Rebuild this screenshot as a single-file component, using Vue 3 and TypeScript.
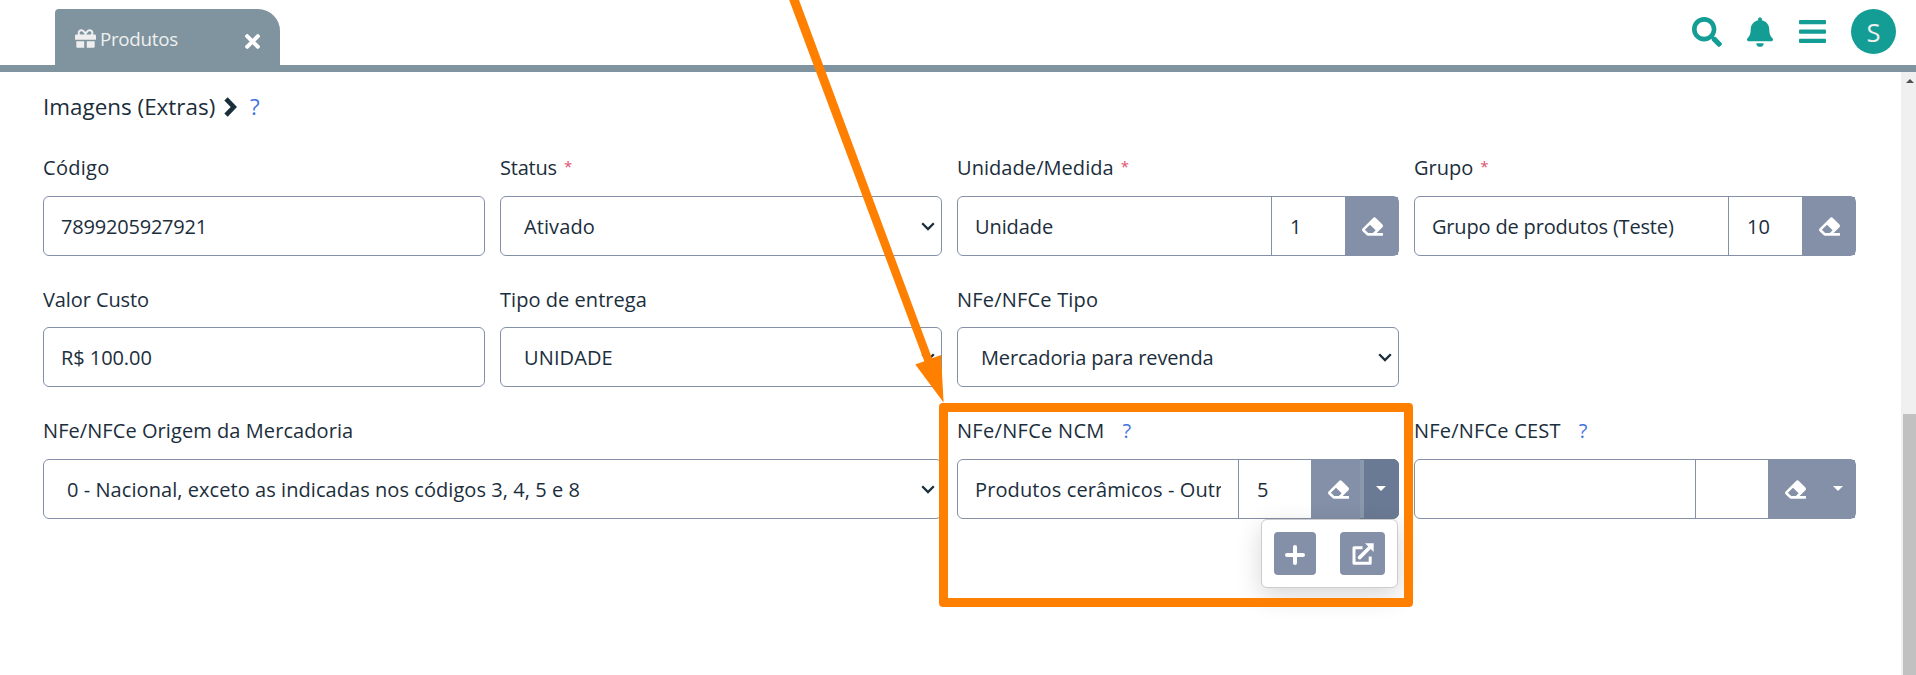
<script setup lang="ts">
interface Field {
  id: string
  label: string
  kind: 'text' | 'select' | 'lookup'
  value: string
  code?: string
  required?: boolean
  help?: boolean
  menu?: boolean
  open?: boolean
  tracking?: number
  labelTracking?: number
}

const fields: Field[] = [
  { id: 'codigo', label: 'Código', kind: 'text', value: '7899205927921', labelTracking: 0.3 },
  { id: 'status', label: 'Status', kind: 'select', value: 'Ativado', required: true, tracking: 0.1, labelTracking: -0.2 },
  { id: 'unidade', label: 'Unidade/Medida', kind: 'lookup', value: 'Unidade', code: '1', required: true, tracking: -0.1, labelTracking: 0.06 },
  { id: 'grupo', label: 'Grupo', kind: 'lookup', value: 'Grupo de produtos (Teste)', code: '10', required: true, tracking: -0.17, labelTracking: 0 },
  { id: 'custo', label: 'Valor Custo', kind: 'text', value: 'R$ 100.00', tracking: -0.07, labelTracking: -0.1 },
  { id: 'entrega', label: 'Tipo de entrega', kind: 'select', value: 'UNIDADE', tracking: 0.12, labelTracking: 0.05 },
  { id: 'tipo', label: 'NFe/NFCe Tipo', kind: 'select', value: 'Mercadoria para revenda', tracking: -0.15, labelTracking: 0.2 },
  { id: 'origem', label: 'NFe/NFCe Origem da Mercadoria', kind: 'select', value: '0 - Nacional, exceto as indicadas nos códigos 3, 4, 5 e 8', tracking: 0.06, labelTracking: 0.07 },
  { id: 'ncm', label: 'NFe/NFCe NCM', kind: 'lookup', value: 'Produtos cerâmicos - Outras', code: '5', help: true, menu: true, open: true, tracking: 0.12, labelTracking: 0.3 },
  { id: 'cest', label: 'NFe/NFCe CEST', kind: 'lookup', value: '', code: '', help: true, menu: true, labelTracking: 0.2 },
]

const spacing = (v?: number) => ({ letterSpacing: `${v ?? -0.2}px` })
</script>

<template>
  <div class="page">
    <header class="topbar">
      <div class="tab">
        <svg class="gift" viewBox="0 0 512 512"><path d="M32 448c0 17.7 14.3 32 32 32h160V320H32v128zm256 32h160c17.7 0 32-14.3 32-32V320H288v160zm192-320h-42.1c6.2-12.1 10.1-25.5 10.1-40 0-48.5-39.5-88-88-88-41.6 0-68.5 21.3-103 68.3-34.5-47-61.4-68.3-103-68.3-48.5 0-88 39.5-88 88 0 14.5 3.8 27.9 10.1 40H32c-17.7 0-32 14.3-32 32v80c0 8.8 7.2 16 16 16h480c8.8 0 16-7.2 16-16v-80c0-17.7-14.3-32-32-32zm-326.1 0c-22.1 0-40-17.9-40-40s17.9-40 40-40c19.9 0 34.6 3.3 86.1 80h-86.1zm206.1 0h-86.1c51.4-76.5 65.7-80 86.1-80 22.1 0 40 17.9 40 40s-17.9 40-40 40z" /></svg>
        <span class="tab-name">Produtos</span>
        <svg class="close" viewBox="0 80 352 352"><path d="M242.72 256l100.07-100.07c12.28-12.28 12.28-32.19 0-44.48l-22.24-22.24c-12.28-12.28-32.19-12.28-44.48 0L176 189.28 75.93 89.21c-12.28-12.28-32.19-12.28-44.48 0L9.21 111.45c-12.28 12.28-12.28 32.19 0 44.48L109.28 256 9.21 356.07c-12.28 12.28-12.28 32.19 0 44.48l22.24 22.24c12.28 12.28 32.2 12.28 44.48 0L176 322.72l100.07 100.07c12.28 12.28 32.2 12.28 44.48 0l22.24-22.24c12.28-12.28 12.28-32.19 0-44.48L242.72 256z" /></svg>
      </div>
      <nav class="actions">
        <svg class="search" viewBox="0 0 512 512"><path d="M505 442.7L405.3 343c-4.5-4.5-10.6-7-17-7H372c27.6-35.3 44-79.7 44-128C416 93.1 322.9 0 208 0S0 93.1 0 208s93.1 208 208 208c48.3 0 92.7-16.4 128-44v16.3c0 6.4 2.5 12.5 7 17l99.7 99.7c9.4 9.4 24.6 9.4 33.9 0l28.3-28.3c9.4-9.4 9.4-24.6.1-34zM208 336c-70.7 0-128-57.2-128-128 0-70.7 57.2-128 128-128 70.7 0 128 57.2 128 128 0 70.7-57.2 128-128 128z" /></svg>
        <svg class="bell" viewBox="0 0 448 512"><path d="M224 512c35.32 0 63.97-28.65 63.97-64H160.03c0 35.35 28.65 64 63.97 64zm215.39-149.71c-19.32-20.76-55.47-51.99-55.47-154.29 0-77.7-54.48-139.9-127.94-155.16V32c0-17.67-14.32-32-31.98-32s-31.98 14.33-31.98 32v20.84C118.56 68.1 64.08 130.3 64.08 208c0 102.3-36.15 133.53-55.47 154.29-6 6.45-8.66 14.16-8.61 21.71.11 16.4 12.98 32 32.1 32h383.8c19.12 0 32-15.6 32.1-32 .05-7.55-2.61-15.27-8.61-21.71z" /></svg>
        <svg class="bars" viewBox="0 0 27 23"><rect width="27" height="4.2" rx="1" /><rect y="9.6" width="27" height="4.2" rx="1" /><rect y="18.8" width="27" height="4.2" rx="1" /></svg>
        <span class="avatar">S</span>
      </nav>
    </header>

    <div class="body">
      <main class="content">
        <h2 class="section">
          <span class="section-name">Imagens (Extras)</span>
          <svg class="chev-right" viewBox="0 0 13 20"><path d="M2 1.8l7.8 8.2L2 18.2" /></svg>
          <span class="help">?</span>
        </h2>

        <div class="grid">
          <div v-for="f in fields" :key="f.id" class="field" :class="`f-${f.id}`">
            <div class="label">
              <span :style="spacing(f.labelTracking)">{{ f.label }}</span>
              <span v-if="f.required" class="required">*</span>
              <span v-if="f.help" class="help">?</span>
            </div>

            <div v-if="f.kind !== 'lookup'" class="box" :class="f.kind">
              <span class="value" :style="spacing(f.tracking)">{{ f.value }}</span>
              <svg v-if="f.kind === 'select'" class="arrow" viewBox="0 0 14 9"><path d="M1.2 1.3L7 7.1l5.8-5.8" /></svg>
            </div>

            <div v-else class="box lookup" :class="{ menu: f.menu }">
              <div class="main"><span class="value" :style="spacing(f.tracking)">{{ f.value }}</span></div>
              <div class="code"><span class="value">{{ f.code }}</span></div>
              <div class="erase">
                <svg viewBox="0 32 512 448"><path d="M497.941 273.941c18.745-18.745 18.745-49.137 0-67.882l-160-160c-18.745-18.745-49.136-18.746-67.883 0l-256 256c-18.745 18.745-18.745 49.137 0 67.882l96 96A48.004 48.004 0 0 0 144 480h356c6.627 0 12-5.373 12-12v-40c0-6.627-5.373-12-12-12H355.883l142.058-142.059zm-302.627-62.627l137.373 137.373L265.373 416H150.628l-80-80 124.686-124.686z" /></svg>
              </div>
              <div v-if="f.menu" class="toggle" :class="{ open: f.open }"><i class="caret"></i></div>
              <div v-if="f.open" class="dropdown">
                <span class="btn add"><svg viewBox="0 0 20 20"><path d="M10 2v16M2 10h16" /></svg></span>
                <span class="btn link"><svg viewBox="0 0 22 22"><path class="frame" d="M10.5 4.8H2v15.4h16.2v-6.7" /><path class="shaft" d="M7.5 14.6L18 4.2" /><path class="head" d="M13 .3h8.7V9z" /></svg></span>
              </div>
            </div>
          </div>
        </div>
      </main>
      <aside class="scrollbar"><i class="up"></i><div class="thumb"></div></aside>
    </div>

    <div class="highlight"></div>
    <svg class="pointer" viewBox="0 0 1916 675"><path d="M789.2 0H799L932 358.3l9-3.3 2.6 47.5-28.3-38 9-3.3z" /></svg>
  </div>
</template>

<style>
body {
  margin: 0;
  overflow: hidden;
}
</style>

<style scoped>
.page {
  position: relative;
  width: 1916px;
  height: 675px;
  overflow: hidden;
  background: #fff;
  color: #1b2e3c;
  font: 20px/28px "Open Sans", "Noto Sans", sans-serif;
  display: flex;
  flex-direction: column;
}
.page * {
  box-sizing: border-box;
}
svg {
  display: block;
  flex: none;
}
.topbar {
  flex: none;
  height: 72px;
  border-bottom: 7px solid #7f949f;
  display: flex;
  justify-content: space-between;
  align-items: flex-start;
  padding: 9px 20px 0 55px;
}
.tab {
  width: 225px;
  height: 56px;
  background: #7f949f;
  border-radius: 4px 22px 0 0;
  display: flex;
  align-items: center;
  padding: 0 20px;
  color: #efefef;
}
.gift {
  width: 21px;
  height: 21px;
  margin-top: 3px;
  fill: #efefef;
}
.tab-name {
  margin-left: 4px;
  font-size: 18.8px;
  letter-spacing: -0.3px;
  padding-top: 3px;
  line-height: 28px;
}
.close {
  width: 15px;
  height: 15px;
  margin: 9px 0 0 auto;
  fill: #fff;
}
.actions {
  display: flex;
  fill: #139d94;
}
.search {
  width: 30px;
  height: 30px;
  margin-top: 8px;
}
.bell {
  width: 26px;
  height: 30px;
  margin: 8px 0 0 25px;
}
.bars {
  width: 27px;
  height: 23px;
  margin: 11px 0 0 26px;
}
.avatar {
  width: 45px;
  height: 45px;
  margin-left: 25px;
  border-radius: 50%;
  background: #139d94;
  color: #efefef;
  font-size: 25.5px;
  line-height: 47px;
  text-align: center;
}
.body {
  flex: 1;
  display: flex;
}
.content {
  flex: 1;
  padding: 19px 45px 0 43px;
}
.section {
  margin: 0 0 33px;
  height: 30px;
  display: flex;
  font-weight: 400;
  font-size: 22.4px;
  line-height: 32px;
}
.section-name {
  width: 181px;
  letter-spacing: 0.02px;
  white-space: nowrap;
}
.chev-right {
  width: 13px;
  height: 20px;
  margin-top: 6px;
}
.chev-right path {
  fill: none;
  stroke: #1b2e3c;
  stroke-width: 4.6;
}
.help {
  color: #4573e0;
}
.section .help {
  margin-left: 13px;
}
.grid {
  display: grid;
  grid-template-columns: repeat(4, 442px);
  grid-template-rows: 102px 101px 102px;
  gap: 30px 15px;
}
.field {
  display: flex;
  flex-direction: column;
  justify-content: space-between;
  min-width: 0;
}
.f-origem {
  grid-column: 1 / span 2;
  grid-row: 3;
}
.f-ncm,
.f-cest {
  grid-row: 3;
}
.label {
  display: flex;
  height: 28px;
  white-space: pre;
}
.required {
  margin-left: 7px;
  color: #e2506b;
  font-size: 15px;
  line-height: 25px;
}
.label .help {
  margin-left: 18px;
}
.box {
  position: relative;
  height: 60px;
  border: 1px solid #8390a8;
  border-radius: 6px;
  display: flex;
  align-items: center;
  background: #fff;
}
.value {
  padding-top: 2px;
  white-space: pre;
}
.text {
  padding-left: 17px;
}
.select {
  padding: 0 6px 0 23px;
  justify-content: space-between;
}
.arrow {
  width: 14px;
  height: 9px;
}
.arrow path {
  fill: none;
  stroke: #1b2e3c;
  stroke-width: 2.3;
}
.lookup > div:not(.dropdown) {
  height: 58px;
  display: flex;
  align-items: center;
}
.main {
  flex: 1;
  min-width: 0;
  margin: 0 17px;
  overflow: hidden;
}
.code {
  width: 74px;
  padding-left: 18px;
  border-left: 1px solid #8390a8;
}
.erase {
  width: 53px;
  padding-left: 17px;
  background: #8390a8;
}
.erase svg {
  width: 21px;
  height: 19px;
  fill: #fff;
}
.menu .code {
  width: 73px;
}
.menu .erase {
  width: 49px;
}
.toggle {
  width: 38px;
  padding: 0 0 2px 16px;
  background: #8390a8;
}
.toggle.open {
  background: #6b7a94;
  border-left: 4px solid #8b98ad;
  padding-left: 12px;
  box-shadow: 1px 0 #6b7a94, 0 1px #6b7a94, 0 -1px #6b7a94;
  border-radius: 0 5px 5px 0;
}
.caret {
  border: 5px solid transparent;
  border-top-color: #fff;
  border-bottom: 0;
}
.dropdown {
  position: absolute;
  z-index: 1;
  top: 59px;
  right: 0;
  width: 137px;
  height: 69px;
  border: 1px solid #ccc;
  border-radius: 6px;
  background: #fff;
  box-shadow: 0 8px 26px rgba(0, 0, 0, 0.16);
  display: flex;
  justify-content: space-between;
  padding: 12px;
}
.btn {
  height: 43px;
  border-radius: 4px;
  background: #8390a8;
  display: flex;
  align-items: center;
  justify-content: center;
}
.add {
  width: 42px;
}
.link {
  width: 45px;
}
.btn path {
  fill: none;
  stroke: #fff;
  stroke-width: 4;
  stroke-linecap: round;
}
.add svg {
  width: 20px;
  height: 20px;
  margin-top: 2px;
}
.link svg {
  width: 22px;
  height: 22px;
  margin-top: 1px;
}
.link .frame {
  stroke-width: 3;
  stroke-linecap: butt;
  stroke-linejoin: round;
}
.link .shaft {
  stroke-width: 3.6;
}
.link .head {
  fill: #fff;
  stroke: none;
}
.scrollbar {
  width: 15px;
  padding: 7px 0 0 2px;
  background: #f0f0f0;
}
.up {
  display: block;
  width: 8px;
  height: 4px;
  margin-left: 3px;
  background: #505050;
  clip-path: polygon(50% 0, 100% 100%, 0 100%);
}
.thumb {
  height: 261px;
  margin-top: 331px;
  background: #c1c1c1;
}
.highlight {
  position: absolute;
  z-index: 2;
  left: 939px;
  top: 403px;
  width: 474px;
  height: 204px;
  border: 9px solid #ff8000;
  border-radius: 4px;
}
.pointer {
  position: absolute;
  z-index: 2;
  inset: 0;
  width: 1916px;
  height: 675px;
  fill: #ff8000;
}
</style>
